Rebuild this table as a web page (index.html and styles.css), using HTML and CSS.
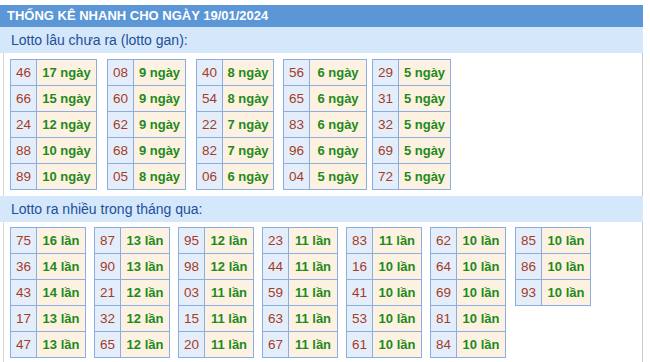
FILE: index.html
```html
<!DOCTYPE html>
<html lang="vi">
<head>
<meta charset="utf-8">
<link rel="stylesheet" href="styles.css">
</head>
<body>
<div class="wrap">
  <div class="title">THỐNG KÊ NHANH CHO NGÀY 19/01/2024</div>
  <div class="band">Lotto lâu chưa ra (lotto gan):</div>
  <div class="area area1">
    <table class="t"><tr><td class="n">46</td><td class="v">17 ngày</td></tr><tr><td class="n">66</td><td class="v">15 ngày</td></tr><tr><td class="n">24</td><td class="v">12 ngày</td></tr><tr><td class="n">88</td><td class="v">10 ngày</td></tr><tr><td class="n">89</td><td class="v">10 ngày</td></tr></table>
    <table class="t"><tr><td class="n">08</td><td class="v">9 ngày</td></tr><tr><td class="n">60</td><td class="v">9 ngày</td></tr><tr><td class="n">62</td><td class="v">9 ngày</td></tr><tr><td class="n">68</td><td class="v">9 ngày</td></tr><tr><td class="n">05</td><td class="v">8 ngày</td></tr></table>
    <table class="t"><tr><td class="n">40</td><td class="v">8 ngày</td></tr><tr><td class="n">54</td><td class="v">8 ngày</td></tr><tr><td class="n">22</td><td class="v">7 ngày</td></tr><tr><td class="n">82</td><td class="v">7 ngày</td></tr><tr><td class="n">06</td><td class="v">6 ngày</td></tr></table>
    <table class="t"><tr><td class="n">56</td><td class="v">6 ngày</td></tr><tr><td class="n">65</td><td class="v">6 ngày</td></tr><tr><td class="n">83</td><td class="v">6 ngày</td></tr><tr><td class="n">96</td><td class="v">6 ngày</td></tr><tr><td class="n">04</td><td class="v">5 ngày</td></tr></table>
    <table class="t"><tr><td class="n">29</td><td class="v">5 ngày</td></tr><tr><td class="n">31</td><td class="v">5 ngày</td></tr><tr><td class="n">32</td><td class="v">5 ngày</td></tr><tr><td class="n">69</td><td class="v">5 ngày</td></tr><tr><td class="n">72</td><td class="v">5 ngày</td></tr></table>
  </div>
  <div class="band">Lotto ra nhiều trong tháng qua:</div>
  <div class="area area2">
    <table class="t"><tr><td class="n">75</td><td class="v">16 lần</td></tr><tr><td class="n">36</td><td class="v">14 lần</td></tr><tr><td class="n">43</td><td class="v">14 lần</td></tr><tr><td class="n">17</td><td class="v">13 lần</td></tr><tr><td class="n">47</td><td class="v">13 lần</td></tr></table>
    <table class="t"><tr><td class="n">87</td><td class="v">13 lần</td></tr><tr><td class="n">90</td><td class="v">13 lần</td></tr><tr><td class="n">21</td><td class="v">12 lần</td></tr><tr><td class="n">32</td><td class="v">12 lần</td></tr><tr><td class="n">65</td><td class="v">12 lần</td></tr></table>
    <table class="t"><tr><td class="n">95</td><td class="v">12 lần</td></tr><tr><td class="n">98</td><td class="v">12 lần</td></tr><tr><td class="n">03</td><td class="v">11 lần</td></tr><tr><td class="n">15</td><td class="v">11 lần</td></tr><tr><td class="n">20</td><td class="v">11 lần</td></tr></table>
    <table class="t"><tr><td class="n">23</td><td class="v">11 lần</td></tr><tr><td class="n">44</td><td class="v">11 lần</td></tr><tr><td class="n">59</td><td class="v">11 lần</td></tr><tr><td class="n">63</td><td class="v">11 lần</td></tr><tr><td class="n">67</td><td class="v">11 lần</td></tr></table>
    <table class="t"><tr><td class="n">83</td><td class="v">11 lần</td></tr><tr><td class="n">16</td><td class="v">10 lần</td></tr><tr><td class="n">41</td><td class="v">10 lần</td></tr><tr><td class="n">53</td><td class="v">10 lần</td></tr><tr><td class="n">61</td><td class="v">10 lần</td></tr></table>
    <table class="t"><tr><td class="n">62</td><td class="v">10 lần</td></tr><tr><td class="n">64</td><td class="v">10 lần</td></tr><tr><td class="n">69</td><td class="v">10 lần</td></tr><tr><td class="n">81</td><td class="v">10 lần</td></tr><tr><td class="n">84</td><td class="v">10 lần</td></tr></table>
    <table class="t"><tr><td class="n">85</td><td class="v">10 lần</td></tr><tr><td class="n">86</td><td class="v">10 lần</td></tr><tr><td class="n">93</td><td class="v">10 lần</td></tr></table>
  </div>
</div>
</body>
</html>
```
FILE: styles.css
```css
html, body {
  margin: 0;
  padding: 0;
  background: #ffffff;
}
body {
  font-family: "Liberation Sans", Arial, sans-serif;
  font-size: 14px;
}
.wrap {
  width: 643px;
  padding-top: 5px;
}
.title {
  height: 22px;
  line-height: 22px;
  background: #5b96d6;
  color: #ffffff;
  font-weight: bold;
  font-size: 13px;
  padding-left: 7px;
}
.band {
  height: 26px;
  line-height: 26px;
  background: #d5e7fa;
  color: #1d4f9a;
  font-size: 14px;
  padding-left: 11px;
}
.area {
  display: flex;
  align-items: flex-start;
  margin-left: 3px;
  border-left: 1px solid #d8d8d8;
  border-right: 1px solid #c8c8d0;
  padding-left: 6px;
}
.area1 {
  padding-top: 6px;
  padding-bottom: 6px;
}
.area2 {
  padding-top: 5px;
  padding-bottom: 7px;
}
.t {
  border-collapse: collapse;
  table-layout: fixed;
}
.t td {
  border: 1px solid #8aaee2;
  height: 25px;
  padding: 0;
  text-align: center;
  font-size: 13.5px;
}
.t .n {
  width: 25px;
  background: #e4eefb;
  color: #a43b27;
}
.t .v {
  background: #fdf2e2;
  color: #1f8a1a;
  font-weight: bold;
  font-size: 13px;
}
.area1 .t:nth-child(1) { width: 87px; }
.area1 .t:nth-child(2) { width: 79px; margin-left: 10px; }
.area1 .t:nth-child(3) { width: 78px; margin-left: 10px; }
.area1 .t:nth-child(4) { width: 84px; margin-left: 9px; }
.area1 .t:nth-child(5) { width: 79px; margin-left: 5px; }
.area2 .t { width: 76px; margin-left: 8px; }
.area2 .t:nth-child(1) { margin-left: 0; }
.area2 .t:nth-child(7) { margin-left: 9px; }
```
